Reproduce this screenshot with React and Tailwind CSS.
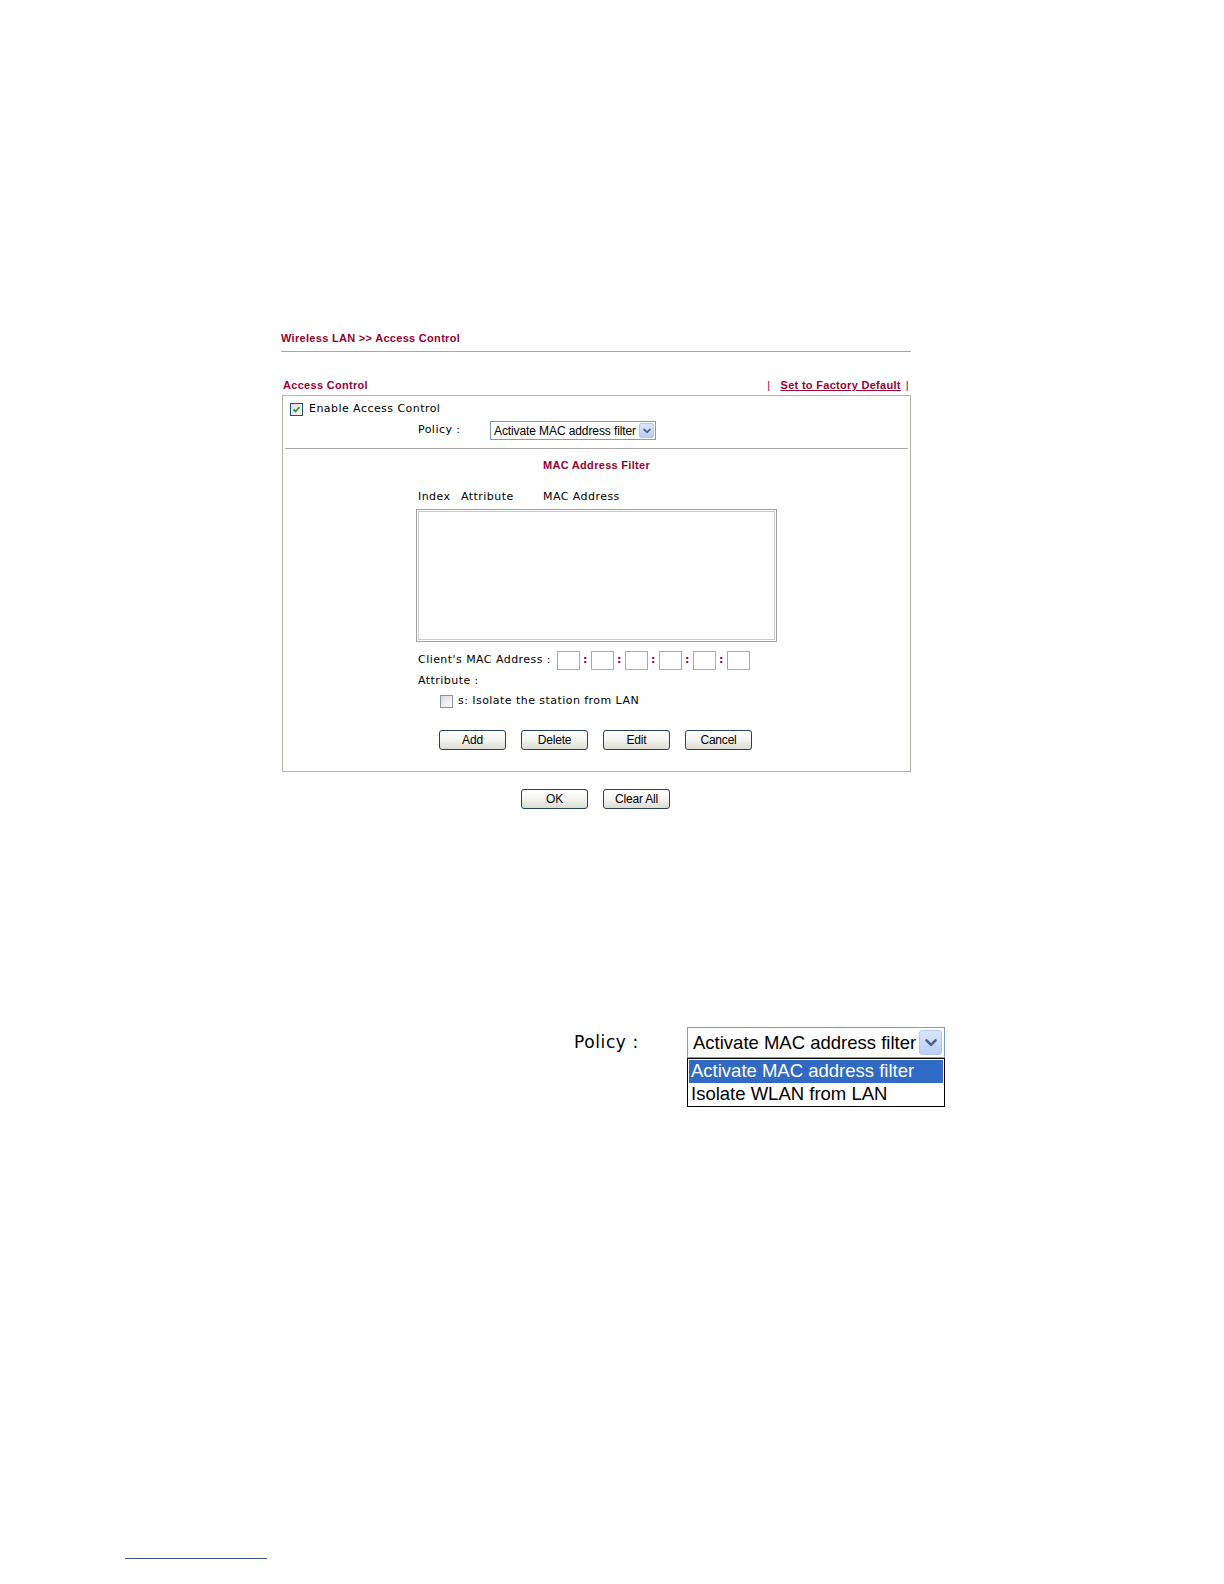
import React from 'react';

const maroon = 'text-[#990033]';

const XpButton = ({ children }) => (
  <button
    type="button"
    className="w-[67px] h-[20px] rounded-[3px] border border-[#27415f] bg-gradient-to-b from-white via-[#f4f4f0] to-[#dcdcd4] text-[12px] leading-[18px] text-black font-['Liberation_Sans',Arial,sans-serif] tracking-[-0.2px]"
  >
    {children}
  </button>
);

const Chevron = ({ size = 14 }) => (
  <svg width={size} height={size} viewBox="0 0 14 14">
    <path d="M3.5 5 L7 8.5 L10.5 5" fill="none" stroke="#4d6185" strokeWidth="2" strokeLinecap="round" strokeLinejoin="round" />
  </svg>
);

const Checkbox = ({ checked }) => (
  <span className="w-[13px] h-[13px] border border-[#1c5180] bg-gradient-to-br from-[#dcdcd7] to-white flex items-center justify-center">
    {checked && (
      <svg width="9" height="9" viewBox="0 0 9 9">
        <path d="M1.5 4.5 L3.5 6.5 L7.5 2" fill="none" stroke="#21a121" strokeWidth="1.8" />
      </svg>
    )}
  </span>
);

const MacBox = () => <span className="w-[23px] h-[19px] border border-[#a5acb2] bg-white" />;

const Colon = () => <span className={`w-[11px] text-center font-bold text-[11px] ${maroon}`}>:</span>;

const App = () => {
  const verdana = "font-['DejaVu_Sans',Verdana,sans-serif]";
  const tahomaBold = "font-['Liberation_Sans',Arial,sans-serif] font-bold tracking-[0.3px]";

  return (
    <div className="w-full h-[1584px] overflow-hidden bg-white flex flex-col">
      {/* Router screen */}
      <div className="ml-[281px] w-[630px] pt-[331px] flex flex-col">
        <div className={`h-[14px] leading-[14px] text-[11px] ${tahomaBold} ${maroon}`}>
          Wireless LAN &gt;&gt; Access Control
        </div>
        <div className="mt-[6px] border-t border-[#a8a8a8]" />

        <div className={`mt-[26px] h-[14px] leading-[14px] text-[11px] ${tahomaBold} ${maroon} flex justify-between pl-[2px] pr-[2px]`}>
          <span>Access Control</span>
          <span>
            <span className="font-normal">|</span>
            <span className="ml-[10px] underline">Set to Factory Default</span>
            <span className="ml-[5px] font-normal">|</span>
          </span>
        </div>

        <div className={`mt-[3px] ml-[1px] w-[629px] border border-[#b4b4a4] flex flex-col text-[11px] tracking-[0.45px] text-black ${verdana}`}>
          <div className="mt-[6px] h-[14px] pl-[7px] flex items-center gap-[6px]">
            <Checkbox checked />
            <span className="leading-[14px]">Enable Access Control</span>
          </div>

          <div className="mt-[5px] h-[19px] pl-[135px] flex items-center">
            <span className="w-[72px]">Policy :</span>
            <div className="w-[166px] h-[19px] border border-[#7f9db9] flex items-center justify-between pl-[3px] pr-[1px] font-['Liberation_Sans',Arial,sans-serif] text-[12px] tracking-[-0.1px]">
              <span>Activate MAC address filter</span>
              <span className="w-[15px] h-[15px] rounded-[2px] bg-gradient-to-b from-[#dbe6fb] to-[#b9cdf4] border border-[#b3c7ef] flex items-center justify-center">
                <Chevron size={12} />
              </span>
            </div>
          </div>

          <div className="mt-[8px] mx-[2px] border-t border-[#a8a8a8]" />

          <div className={`mt-[9px] h-[14px] leading-[14px] text-center text-[11px] ${tahomaBold} ${maroon}`}>
            MAC Address Filter
          </div>

          <div className="mt-[18px] h-[14px] leading-[14px] pl-[135px] flex">
            <span className="w-[43px]">Index</span>
            <span className="w-[82px]">Attribute</span>
            <span>MAC Address</span>
          </div>

          <div className="mt-[5px] ml-[133px] w-[361px] h-[133px] border border-[#a0a0a0] p-[1px]">
            <div className="w-full h-full border border-[#c8c8c8] bg-white" />
          </div>

          <div className="mt-[9px] h-[19px] pl-[135px] flex items-center">
            <span className="w-[139px]">Client's MAC Address :</span>
            <MacBox /><Colon /><MacBox /><Colon /><MacBox /><Colon />
            <MacBox /><Colon /><MacBox /><Colon /><MacBox />
          </div>

          <div className="mt-[4px] h-[14px] leading-[14px] pl-[135px]">Attribute :</div>

          <div className="mt-[6px] h-[14px] pl-[157px] flex items-center gap-[5px]">
            <span className="w-[13px] h-[13px] border border-[#8594a8] bg-gradient-to-br from-[#dcdcd7] to-white" />
            <span className="leading-[14px]">s: Isolate the station from LAN</span>
          </div>

          <div className="mt-[22px] pl-[156px] flex gap-[15px] tracking-normal">
            <XpButton>Add</XpButton>
            <XpButton>Delete</XpButton>
            <XpButton>Edit</XpButton>
            <XpButton>Cancel</XpButton>
          </div>

          <div className="h-[21px]" />
        </div>

        <div className="mt-[17px] pl-[240px] flex gap-[15px]">
          <XpButton>OK</XpButton>
          <XpButton>Clear All</XpButton>
        </div>
      </div>

      {/* Enlarged policy drop-down */}
      <div className="mt-[218px] ml-[574px] flex items-start">
        <span className={`w-[113px] h-[31px] leading-[31px] text-[17px] tracking-[0.6px] ${verdana}`}>Policy :</span>
        <div className="flex flex-col w-[258px] font-['Liberation_Sans',Arial,sans-serif]">
          <div className="h-[31px] border border-[#7f9db9] flex items-center justify-between pl-[5px] pr-[2px] text-[18.5px]">
            <span>Activate MAC address filter</span>
            <span className="w-[23px] h-[25px] rounded-[3px] bg-gradient-to-b from-[#dbe6fb] to-[#b9cdf4] border border-[#b3c7ef] flex items-center justify-center">
              <Chevron size={18} />
            </span>
          </div>
          <div className="border border-black p-[1px] text-[18.5px] leading-[22px]">
            <div className="h-[23px] bg-[#316ac5] text-white pl-[2px]">Activate MAC address filter</div>
            <div className="h-[22px] pl-[2px]">Isolate WLAN from LAN</div>
          </div>
        </div>
      </div>

      <div className="mt-[451px] ml-[125px] w-[142px] border-t border-[#3a50a0]" />
    </div>
  );
};

export default App;
